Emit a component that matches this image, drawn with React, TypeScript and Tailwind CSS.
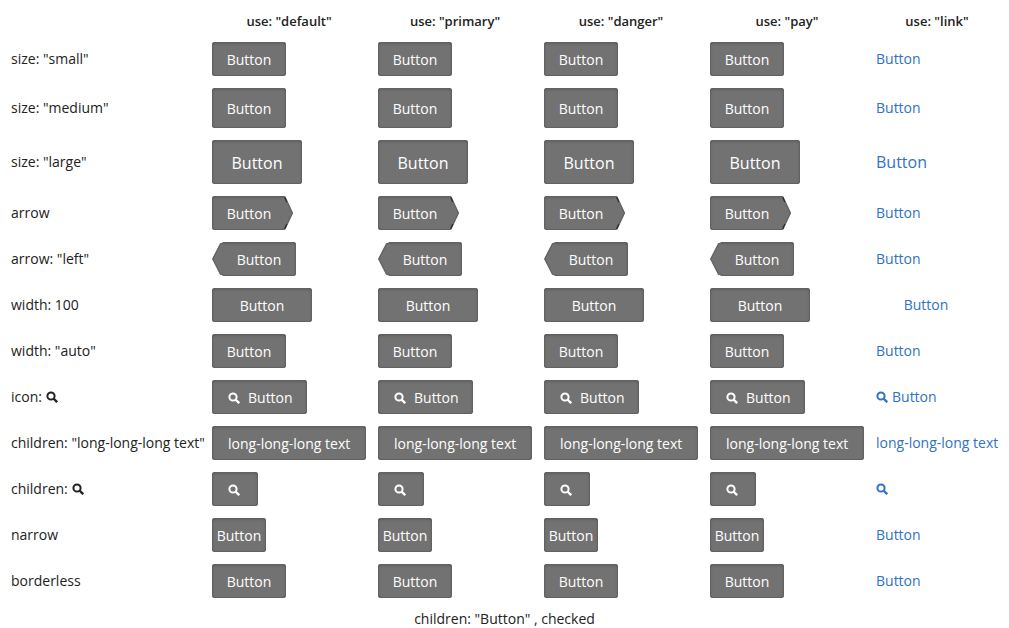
import type { ReactNode } from 'react';

type Kind = 'solid' | 'link';

type Variant = {
  label: ReactNode;
  name: string;
  size?: 'small' | 'medium' | 'large';
  arrow?: 'right' | 'left';
  width?: 'fixed' | 'auto';
  narrow?: boolean;
  icon?: boolean;
  text?: string;
};

const uses = ['default', 'primary', 'danger', 'pay', 'link'];

function SearchIcon() {
  return (
    <svg viewBox="0 0 12 12" className="inline-block size-3 shrink-0" fill="none" stroke="currentColor" aria-hidden="true">
      <circle cx="5" cy="5" r="3.6" strokeWidth="2" />
      <path d="M7.5 7.5 L11.2 11.2" strokeWidth="2.4" />
    </svg>
  );
}

const variants: Variant[] = [
  { name: 'small', label: 'size: "small"', text: 'Button' },
  { name: 'medium', label: 'size: "medium"', size: 'medium', text: 'Button' },
  { name: 'large', label: 'size: "large"', size: 'large', text: 'Button' },
  { name: 'arrow', label: 'arrow', arrow: 'right', text: 'Button' },
  { name: 'arrow-left', label: 'arrow: "left"', arrow: 'left', text: 'Button' },
  { name: 'width-100', label: 'width: 100', width: 'fixed', text: 'Button' },
  { name: 'width-auto', label: 'width: "auto"', width: 'auto', text: 'Button' },
  { name: 'icon', label: <>icon: <SearchIcon /></>, icon: true, text: 'Button' },
  { name: 'long', label: 'children: "long-long-long text"', text: 'long-long-long text' },
  { name: 'icon-only', label: <>children: <SearchIcon /></>, icon: true },
  { name: 'narrow', label: 'narrow', narrow: true, text: 'Button' },
  { name: 'borderless', label: 'borderless', text: 'Button' },
];

function Arrow({ side }: { side: 'right' | 'left' }) {
  if (side === 'right') {
    return (
      <svg viewBox="0 0 10 34" className="absolute top-0 -right-[7px] h-[34px] w-2.5" aria-hidden="true">
        <path d="M0 1 H2 L9.8 17 L2 33 H0 Z" fill="#727272" />
        <path d="M2 1 L9.4 17 L2 33" fill="none" stroke="#626262" strokeWidth="1.3" />
        <path d="M1.6 1.2 L3.8 6 M1.6 32.8 L3.8 28" stroke="#2a2a2a" strokeWidth="1.2" />
      </svg>
    );
  }
  return (
    <svg viewBox="0 0 13 34" className="absolute top-0 -left-2.5 h-[34px] w-[13px]" aria-hidden="true">
      <path d="M13 2 H8.5 L0.5 17 L8.5 32 H13 Z" fill="#727272" />
      <path d="M12 1 L8.5 1.9 L0.7 17 L8.5 32.1 L12 33" fill="none" stroke="#626262" strokeWidth="1.3" />
    </svg>
  );
}

function Button({ variant, kind }: { variant: Variant; kind: Kind }) {
  const { size = 'small', arrow, width, narrow, icon, text } = variant;
  const label = text ? undefined : 'Search';
  const content = (
    <>
      {icon && <SearchIcon />}
      {text && <span>{text}</span>}
    </>
  );

  if (kind === 'link') {
    return (
      <button
        type="button"
        aria-label={label}
        className={`inline-flex cursor-pointer items-center justify-center gap-1 whitespace-nowrap text-[#3072c4] ${
          size === 'large' ? 'text-base leading-5' : 'text-sm leading-5'
        } ${width === 'fixed' ? 'w-[100px]' : ''}`}
      >
        {content}
      </button>
    );
  }

  const sizing =
    size === 'large' ? 'h-11 text-base' : size === 'medium' ? 'h-10 text-sm' : 'h-[34px] text-sm';
  let spacing = 'justify-center px-[15px]';
  if (narrow) spacing = 'justify-center w-[54px]';
  else if (width === 'fixed') spacing = 'justify-center w-[100px]';
  else if (size === 'large') spacing = 'justify-center w-[90px]';
  else if (icon && text) spacing = 'gap-2 w-[95px] pl-4';
  else if (icon) spacing = 'w-[46px] pl-4';
  else if (text !== 'Button') spacing = 'justify-center px-4';
  else spacing = 'justify-center w-[74px]';

  return (
    <button
      type="button"
      aria-pressed="true"
      aria-label={label}
      className={`relative inline-flex cursor-pointer items-center rounded-[3px] bg-[#727272] pt-0.5 whitespace-nowrap text-white shadow-[inset_0_0_0_1px_#626262,inset_0_1px_3px_rgba(0,0,0,0.3)] ${sizing} ${spacing} ${
        arrow === 'left' ? 'ml-2.5' : ''
      }`}
    >
      {arrow && <Arrow side={arrow} />}
      {content}
    </button>
  );
}

export default function App() {
  return (
    <main className="bg-white px-[5px] pt-1.5 font-['Open_Sans','Noto_Sans',sans-serif] text-sm text-[#222]">
      <table className="w-full table-fixed border-collapse">
        <caption className="caption-bottom pt-[5px] text-center leading-5">children: "Button" , checked</caption>
        <colgroup>
          <col className="w-[201px]" />
          <col className="w-[166px]" />
          <col className="w-[166px]" />
          <col className="w-[166px]" />
          <col className="w-[166px]" />
          <col />
        </colgroup>
        <thead>
          <tr className="h-[30px]">
            <td />
            {uses.map((use) => (
              <th key={use} scope="col" className="text-center text-[13px] font-semibold">
                use: "{use}"
              </th>
            ))}
          </tr>
        </thead>
        <tbody>
          {variants.map((variant) => (
            <tr key={variant.name}>
              <th scope="row" className="px-1.5 text-left font-normal whitespace-nowrap">
                <span className="flex items-center gap-1">{variant.label}</span>
              </th>
              {uses.map((use) => (
                <td key={use} className="px-1.5 py-1.5">
                  <div className="flex">
                    <Button variant={variant} kind={use === 'link' ? 'link' : 'solid'} />
                  </div>
                </td>
              ))}
            </tr>
          ))}
        </tbody>
      </table>
    </main>
  );
}
